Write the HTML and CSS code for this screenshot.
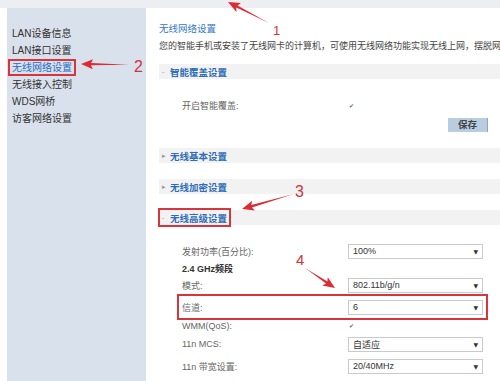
FILE: index.html
```html
<!DOCTYPE html>
<html>
<head>
  <meta charset="utf-8">
  <title>无线网络设置</title>
  <link rel="stylesheet" href="styles.css">
</head>
<body>
  <div class="topbar"></div>
  <div class="page">
    <div class="sidebar">
      <ul class="menu">
        <li><span>LAN设备信息</span></li>
        <li><span>LAN接口设置</span></li>
        <li class="active"><span>无线网络设置</span></li>
        <li><span>无线接入控制</span></li>
        <li><span>WDS网桥</span></li>
        <li><span>访客网络设置</span></li>
      </ul>
    </div>
    <div class="main">
      <h1 class="title">无线网络设置</h1>
      <p class="desc">您的智能手机或安装了无线网卡的计算机，可使用无线网络功能实现无线上网，摆脱网线的束缚。</p>

      <div class="panel">
        <div class="panel-head"><span class="head-label"><span class="mark">-</span>智能覆盖设置</span></div>
        <div class="panel-body">
          <div class="row"><label>开启智能覆盖:</label><span class="check">✔</span></div>
          <div class="actions"><button class="btn">保存</button></div>
        </div>
      </div>

      <div class="panel">
        <div class="panel-head"><span class="head-label"><span class="mark">▸</span>无线基本设置</span></div>
      </div>

      <div class="panel">
        <div class="panel-head"><span class="head-label"><span class="mark">▸</span>无线加密设置</span></div>
      </div>

      <div class="panel">
        <div class="panel-head"><span class="head-label marked"><span class="mark">-</span>无线高级设置</span></div>
        <div class="panel-body">
          <div class="row"><label>发射功率(百分比):</label><div class="select"><span>100%</span><span class="caret">▼</span></div></div>
          <div class="row band"><label>2.4 GHz频段</label></div>
          <div class="row"><label>模式:</label><div class="select"><span>802.11b/g/n</span><span class="caret">▼</span></div></div>
          <div class="row marked"><label>信道:</label><div class="select"><span>6</span><span class="caret">▼</span></div></div>
          <div class="row short"><label>WMM(QoS):</label><span class="check">✔</span></div>
          <div class="row"><label>11n MCS:</label><div class="select"><span>自适应</span><span class="caret">▼</span></div></div>
          <div class="row"><label>11n 带宽设置:</label><div class="select"><span>20/40MHz</span><span class="caret">▼</span></div></div>
          <div class="row"><label>11n 短保护间隔设置:</label><div class="select"><span>开启</span><span class="caret">▼</span></div></div>
        </div>
      </div>
    </div>
  </div>

  <!-- 标注箭头 -->
  <svg class="notes" width="500" height="381" viewBox="0 0 500 381">
    <g fill="#dd2b31">
      <polygon transform="translate(228 2) rotate(27.1)" points="0,0 12,-5 10,-1.2 46,0 10,1.2 12,5"/>
      <polygon transform="translate(81 64) rotate(1)" points="0,0 12,-5 10,-1.2 48,0 10,1.2 12,5"/>
      <polygon transform="translate(242 209) rotate(-16.1)" points="0,0 12,-5 10,-1.2 54,0 10,1.2 12,5"/>
      <polygon transform="translate(335 288) rotate(-146.3)" points="0,0 12,-5 10,-1.2 36,0 10,1.2 12,5"/>
    </g>
    <g class="num">
      <text x="273" y="35" font-size="13">1</text>
      <text x="134" y="72" font-size="16">2</text>
      <text x="295" y="197" font-size="16">3</text>
      <text x="296" y="265" font-size="15">4</text>
    </g>
  </svg>
</body>
</html>
```

FILE: styles.css
```css
html, body {
  height: 100%;
  overflow: hidden;
}

body {
  margin: 0;
  padding: 0;
  font-family: "Liberation Sans", "Noto Sans CJK SC", sans-serif;
  color: #333;
  background-color: #fff;
}

.topbar {
  height: 8px;
  background-color: #eceef2;
}

.page {
  display: flex;
  height: calc(100% - 8px);
}

.sidebar {
  flex: 0 0 139px;
  margin-left: 7px;
  padding-top: 17px;
  background-color: #d9e1ec;
}

.menu {
  list-style: none;
  margin: 0;
  padding: 0 0 0 3px;
}

.menu li {
  height: 17px;
  display: flex;
  align-items: center;
  font-size: 10px;
  color: #333;
}

.menu li span {
  padding: 0 2px;
  line-height: 13px;
}

.menu li.active span {
  color: #2a6cc6;
  outline: 2px solid #d8343c;
}

.main {
  flex: 1;
  min-width: 0;
  padding: 14px 0 0 13px;
}

.title {
  margin: 0;
  font-size: 9.5px;
  font-weight: normal;
  line-height: 14px;
  color: #3878c6;
}

.desc {
  margin: 3px 0 11px;
  font-size: 9px;
  line-height: 14px;
  color: #444;
  white-space: nowrap;
  overflow: hidden;
}

.panel {
  margin-bottom: 16px;
}

.panel-head {
  height: 15px;
  display: flex;
  align-items: center;
  padding-left: 3px;
  background-color: #f2f2f2;
  font-size: 9.5px;
  font-weight: bold;
  color: #2f6db8;
}

.head-label {
  display: flex;
  align-items: center;
  height: 15px;
}

.head-label.marked {
  margin-left: -2px;
  padding: 0 2px;
  outline: 2px solid #d8343c;
}

.mark {
  width: 8px;
  font-size: 7px;
  font-weight: normal;
  color: #999;
}

.panel-body {
  padding: 15px 12px 0 23px;
}

.row {
  display: flex;
  align-items: center;
  width: 301px;
  height: 22px;
}

.row label {
  flex: none;
  width: 166px;
  font-size: 9px;
  color: #666;
}

.row.band {
  height: 12px;
}

.row.band label {
  font-weight: bold;
  color: #333;
}

.row.short {
  height: 15px;
}

.row.marked {
  margin: -2px -5px;
  padding: 0 3px;
  border: 2px solid #d8343c;
}

.select {
  width: 135px;
  height: 15px;
  box-sizing: border-box;
  display: flex;
  align-items: center;
  justify-content: space-between;
  padding: 0 4px;
  border: 1px solid #cacaca;
  font-size: 9px;
  color: #333;
}

.select .caret {
  font-family: "DejaVu Sans", sans-serif;
  font-size: 6px;
  color: #333;
}

.check {
  margin-left: 1px;
  font-family: "DejaVu Sans", sans-serif;
  font-size: 6px;
  color: #666;
}

.actions {
  display: flex;
  justify-content: flex-end;
  margin-top: 2px;
}

.btn {
  width: 40px;
  height: 14px;
  padding: 0;
  border: none;
  border-right: 1px solid #8fa6bd;
  background-color: #b9cde1;
  font-family: "Liberation Sans", "Noto Sans CJK SC", sans-serif;
  font-size: 9.5px;
  font-weight: bold;
  line-height: 14px;
  color: #444;
}

.notes {
  position: absolute;
  left: 0;
  top: 0;
  pointer-events: none;
}

.notes .num {
  font-family: "Liberation Sans", sans-serif;
  fill: #d0343a;
}
```
